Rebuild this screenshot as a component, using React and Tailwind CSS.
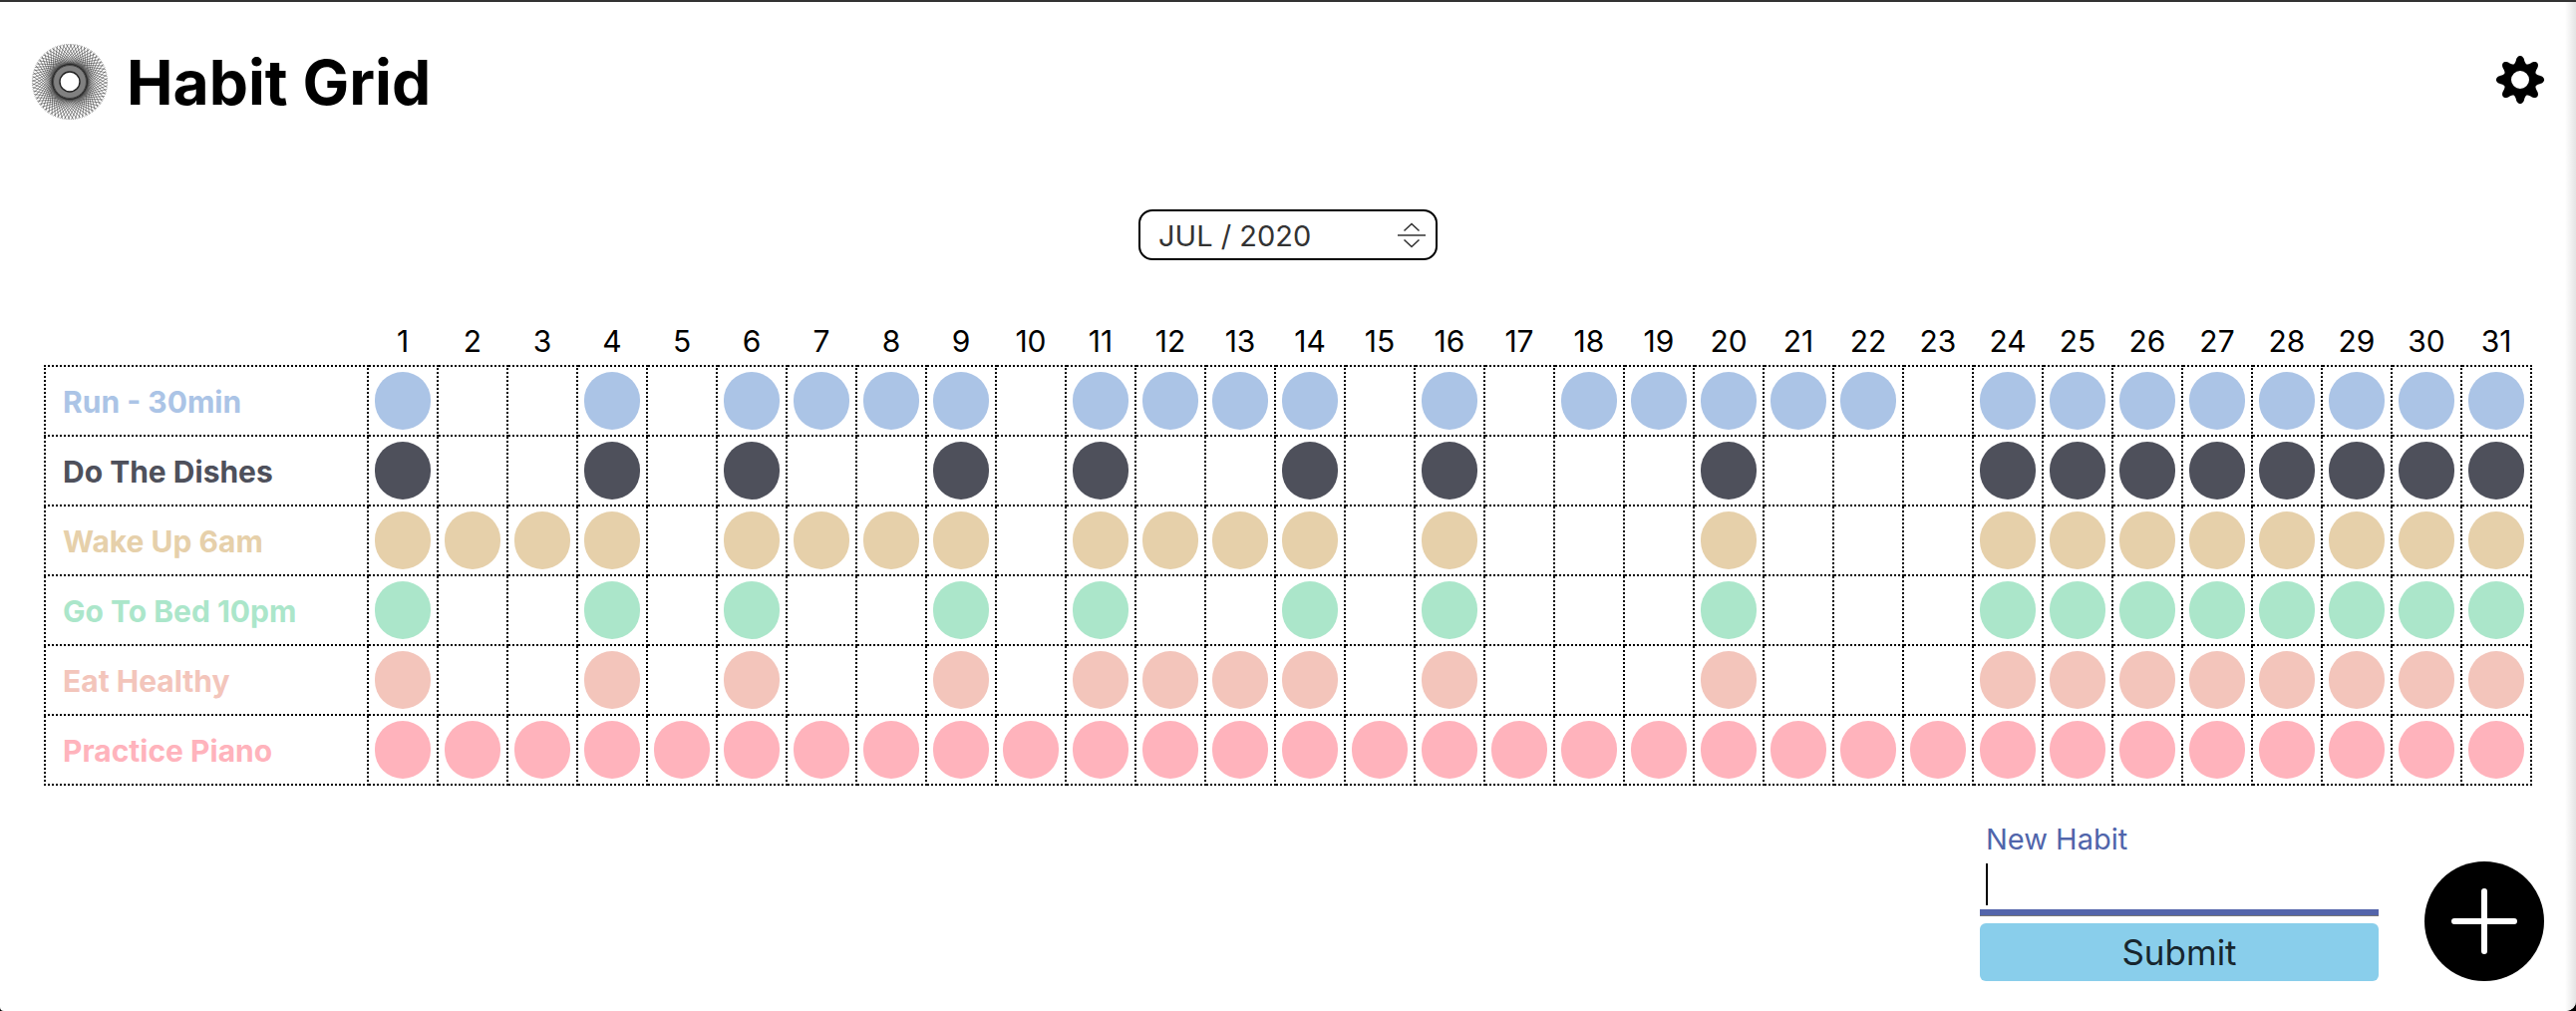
import React from "react";

const range = (a, b) => Array.from({ length: b - a + 1 }, (_, i) => a + i);
const tail = range(24, 31);
const habits = [
  { name: "Run - 30min", color: "#abc4e6", days: [1, 4, 6, 7, 8, 9, 11, 12, 13, 14, 16, 18, 19, 20, 21, 22, ...tail] },
  { name: "Do The Dishes", color: "#4e505b", days: [1, 4, 6, 9, 11, 14, 16, 20, ...tail] },
  { name: "Wake Up 6am", color: "#e6d0aa", days: [1, 2, 3, 4, 6, 7, 8, 9, 11, 12, 13, 14, 16, 20, ...tail] },
  { name: "Go To Bed 10pm", color: "#abe6ca", days: [1, 4, 6, 9, 11, 14, 16, 20, ...tail] },
  { name: "Eat Healthy", color: "#f3c5bb", days: [1, 4, 6, 9, 11, 12, 13, 14, 16, 20, ...tail] },
  { name: "Practice Piano", color: "#ffb3bc", days: range(1, 31) },
];

function chords(n, radius, stepDeg) {
  let d = "";
  for (let i = 0; i < n; i++) {
    const a = (i / n) * 2 * Math.PI;
    const b = a + (stepDeg * Math.PI) / 180;
    d += `M${(radius * Math.cos(a)).toFixed(2)} ${(radius * Math.sin(a)).toFixed(2)}L${(radius * Math.cos(b)).toFixed(2)} ${(radius * Math.sin(b)).toFixed(2)}`;
  }
  return d;
}

function Logo() {
  return (
    <svg width="78" height="78" viewBox="-39 -39 78 78" className="shrink-0">
      <path d={chords(64, 38, 127)} fill="none" stroke="#222" strokeWidth="0.5" />
      <circle r="16.5" fill="#808080" stroke="#444" strokeWidth="1" />
      <circle r="10" fill="#fff" stroke="#222" strokeWidth="1.4" />
    </svg>
  );
}

function Gear() {
  const pts = [];
  const steps = 240;
  for (let i = 0; i < steps; i++) {
    const t = (i / steps) * 2 * Math.PI;
    const c = Math.cos(8 * t);
    const r = 20.5 + 3.6 * Math.sign(c) * Math.pow(Math.abs(c), 0.8);
    pts.push(`${(r * Math.sin(t)).toFixed(2)} ${(-r * Math.cos(t)).toFixed(2)}`);
  }
  const d = `M${pts.join("L")}Z M9 0A9 9 0 1 0 -9 0A9 9 0 1 0 9 0Z`;
  return (
    <svg width="50" height="50" viewBox="-25 -25 50 50">
      <path d={d} fill="#000" fillRule="evenodd" />
    </svg>
  );
}

function SelectIcon() {
  return (
    <svg width="28" height="28" viewBox="0 0 28 28" fill="none" stroke="#333" strokeWidth="1.6">
      <path d="M6.5 9.5L14 2.5L21.5 9.5" />
      <path d="M0 14H28" />
      <path d="M6.5 18.5L14 25.5L21.5 18.5" />
    </svg>
  );
}

export default function App() {
  return (
    <div className="h-[1014px] w-full bg-black">
      <div className="relative h-[1014px] w-full overflow-hidden rounded-bl-[4px] rounded-br-[10px] border-t-2 border-[#333333] bg-white font-['Inter',sans-serif] text-black">
        <header className="flex h-[158px] items-start justify-between pl-[31px] pr-[31px] pt-[41px]">
          <div className="flex items-center gap-[18px]">
            <Logo />
            <h1 className="pt-[2px] text-[62.3px] font-bold leading-[76px]">Habit Grid</h1>
          </div>
          <div className="pt-[12px]">
            <Gear />
          </div>
        </header>

        <div className="mt-[50px] flex justify-center">
          <div className="flex h-[51px] w-[300px] items-center justify-between rounded-[14px] border-2 border-black pl-[18px] pr-[10px] text-[29px] text-[#333333]">
            <span className="pt-[3px]">JUL / 2020</span>
            <SelectIcon />
          </div>
        </div>

        <table className="mx-auto mt-[54px] w-[2494px] table-fixed border-collapse">
          <thead>
            <tr className="h-[52px]">
              <th className="w-[324px]" />
              {range(1, 31).map((d) => (
                <th key={d} className="w-[70px] pt-[3px] text-center text-[30px] font-normal leading-[36px]">
                  {d}
                </th>
              ))}
            </tr>
          </thead>
          <tbody>
            {habits.map((h) => (
              <tr key={h.name} className="h-[70px]">
                <td className="border-2 border-dotted border-black pl-[17px] pt-[3px] text-[30px] font-bold" style={{ color: h.color }}>
                  {h.name}
                </td>
                {range(1, 31).map((d) => (
                  <td key={d} className="border-2 border-dotted border-black p-0">
                    {h.days.includes(d) && (
                      <div className="mx-auto h-[58px] w-[56px] rounded-full" style={{ backgroundColor: h.color }} />
                    )}
                  </td>
                ))}
              </tr>
            ))}
          </tbody>
        </table>

        <div className="mt-[36px] flex items-end justify-end gap-[46px] pr-[32px]">
          <form className="w-[400px]">
            <label className="block pl-[6px] text-[29px] leading-[36px] text-[#5065ab]">New Habit</label>
            <div className="relative h-[58px] border-b-[6px] border-[#5465ab] shadow-[0_1px_0_#777777]">
              <span className="absolute left-[6px] top-[6px] h-[42px] w-[2px] bg-black" />
            </div>
            <button type="button" className="mt-[8px] block h-[58px] w-full rounded-[6px] bg-[#89ceeb] text-[35px] leading-[58px] text-[#17262e]">
              Submit
            </button>
          </form>
          <button type="button" className="flex h-[120px] w-[120px] items-center justify-center rounded-full bg-black">
            <svg width="68" height="68" viewBox="0 0 68 68" stroke="#fff" strokeWidth="6" strokeLinecap="round">
              <path d="M34 4V64M4 34H64" />
            </svg>
          </button>
        </div>

        <div className="pointer-events-none absolute inset-y-0 right-0 w-[11px] bg-gradient-to-r from-white to-[#e4e4e4]" />
      </div>
    </div>
  );
}
